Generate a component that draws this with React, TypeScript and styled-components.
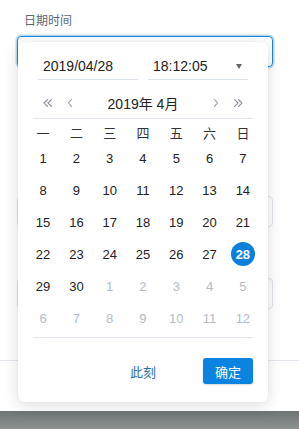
import React from 'react';
import styled, { createGlobalStyle } from 'styled-components';

type Day = { n: number; muted?: boolean; selected?: boolean };

const weekdays = ['一', '二', '三', '四', '五', '六', '日'];

const buildDays = (): Day[] => {
  const days: Day[] = [];
  for (let i = 1; i <= 30; i++) days.push({ n: i, selected: i === 28 });
  for (let i = 1; i <= 12; i++) days.push({ n: i, muted: true });
  return days;
};

const GlobalStyle = createGlobalStyle`
  html, body {
    margin: 0;
    padding: 0;
    background: #fff;
  }
  body {
    font-family: "Liberation Sans", "Noto Sans CJK SC", sans-serif;
    color: #222;
  }
`;

const Chevron = ({ dir, double }: { dir: 'left' | 'right'; double?: boolean }) => {
  const flip = dir === 'right' ? 'scale(-1,1) translate(-14,0)' : undefined;
  return (
    <svg width="14" height="10" viewBox="0 0 14 10">
      <g transform={flip} fill="none" stroke="#8f9aa6" strokeWidth="1.1" strokeLinecap="round" strokeLinejoin="round">
        {double ? (
          <>
            <path d="M6.5 1.5 L3 5 L6.5 8.5" />
            <path d="M10.5 1.5 L7 5 L10.5 8.5" />
          </>
        ) : (
          <path d="M8.5 1.5 L5.5 5 L8.5 8.5" />
        )}
      </g>
    </svg>
  );
};

export default function App() {
  const days = buildDays();

  return (
    <Page>
      <GlobalStyle />
      <Main>
        <Field $after={106}>
          <Label>日期时间</Label>
          <Input $focused />
        </Field>
        {/* fields below sit under the open picker; only their edges show */}
        <Field $after={28}>
          <Label />
          <Input />
        </Field>
        <Field $after={0}>
          <Label />
          <Input />
        </Field>

        <Popup>
          <DateRow>
            <DateInput>2019/04/28</DateInput>
            <DateInput>
              18:12:05
              <Caret />
            </DateInput>
          </DateRow>

          <Nav>
            <NavGroup>
              <NavButton><Chevron dir="left" double /></NavButton>
              <NavButton><Chevron dir="left" /></NavButton>
            </NavGroup>
            <Title>2019年 4月</Title>
            <NavGroup>
              <NavButton><Chevron dir="right" /></NavButton>
              <NavButton><Chevron dir="right" double /></NavButton>
            </NavGroup>
          </Nav>

          <WeekRow>
            {weekdays.map((w) => (
              <WeekCell key={w}>{w}</WeekCell>
            ))}
          </WeekRow>

          <DayGrid>
            {days.map((d, i) => (
              <DayCell key={i} $muted={d.muted}>
                <DayNum $selected={d.selected}>{d.n}</DayNum>
              </DayCell>
            ))}
          </DayGrid>

          <PopupFooter>
            <span />
            <NowLink>此刻</NowLink>
            <OkButton>确定</OkButton>
          </PopupFooter>
        </Popup>
      </Main>
      <Footer />
      <BottomBar />
    </Page>
  );
}

const Page = styled.div`
  display: flex;
  flex-direction: column;
  height: 429px;
  overflow: hidden;
`;

const Main = styled.div`
  position: relative;
  flex: 1;
  padding: 13px 26px 0 17px;
`;

const Field = styled.div<{ $after: number }>`
  display: flex;
  flex-direction: column;
  gap: 7px;
  margin-bottom: ${(p) => p.$after}px;
`;

const Label = styled.div`
  height: 16px;
  font-size: 12px;
  line-height: 16px;
  color: #5b6775;
  padding-left: 7px;
`;

const Input = styled.div<{ $focused?: boolean }>`
  height: 29px;
  border: 1px solid ${(p) => (p.$focused ? '#1a86e0' : '#dfe5ec')};
  border-radius: 4px;
  box-shadow: ${(p) => (p.$focused ? '0 0 0 1.5px rgba(26,134,224,0.3)' : 'none')};
`;

const Popup = styled.div`
  position: absolute;
  top: 42px;
  left: 18px;
  width: 250px;
  height: 360px;
  box-sizing: border-box;
  padding: 10px 15px 0;
  background: #fff;
  border-radius: 6px;
  box-shadow: 0 3px 16px rgba(0, 0, 0, 0.14), 0 0 2px rgba(0, 0, 0, 0.05);
  display: flex;
  flex-direction: column;
`;

const DateRow = styled.div`
  display: flex;
  gap: 10px;
  padding: 0 5px;
`;

const DateInput = styled.div`
  position: relative;
  width: 100px;
  height: 28px;
  box-sizing: border-box;
  border-bottom: 1px solid #dbe3ec;
  padding-left: 5px;
  font-size: 14px;
  line-height: 28px;
  color: #222;
`;

const Caret = styled.span`
  position: absolute;
  right: 6px;
  top: 12px;
  width: 0;
  height: 0;
  border-left: 3.5px solid transparent;
  border-right: 3.5px solid transparent;
  border-top: 5px solid #666;
`;

const Nav = styled.div`
  display: flex;
  align-items: center;
  justify-content: space-between;
  margin-top: 8px;
  height: 30px;
  padding: 0 8px;
  border-bottom: 1px solid #e3e9ef;
`;

const NavGroup = styled.div`
  display: flex;
  gap: 8px;
`;

const NavButton = styled.span`
  display: flex;
  align-items: center;
  justify-content: center;
  width: 14px;
  height: 14px;
`;

const Title = styled.div`
  font-size: 14px;
  color: #222;
`;

const WeekRow = styled.div`
  display: grid;
  grid-template-columns: repeat(7, 33.3px);
  justify-content: center;
  margin: 0 -7px;
  padding-top: 5px;
  height: 18px;
`;

const WeekCell = styled.div`
  text-align: center;
  font-size: 13px;
  line-height: 20px;
  color: #333;
`;

const DayGrid = styled.div`
  display: grid;
  grid-template-columns: repeat(7, 33.3px);
  grid-auto-rows: 32px;
  justify-content: center;
  margin: 0 -7px;
`;

const DayCell = styled.div<{ $muted?: boolean }>`
  display: flex;
  align-items: center;
  justify-content: center;
  font-size: 13px;
  color: ${(p) => (p.$muted ? '#b3bcc6' : '#222')};
`;

const DayNum = styled.span<{ $selected?: boolean }>`
  display: flex;
  align-items: center;
  justify-content: center;
  width: 24px;
  height: 24px;
  border-radius: 50%;
  background: ${(p) => (p.$selected ? '#0a80dc' : 'transparent')};
  color: ${(p) => (p.$selected ? '#fff' : 'inherit')};
  font-weight: ${(p) => (p.$selected ? 700 : 400)};
`;

const PopupFooter = styled.div`
  display: grid;
  grid-template-columns: 1fr auto 1fr;
  align-items: center;
  margin-top: 3px;
  padding-top: 20px;
  border-top: 1px solid #e3e9ef;
`;

const NowLink = styled.span`
  font-size: 13px;
  color: #2d6ea8;
`;

const OkButton = styled.button`
  justify-self: end;
  width: 50px;
  height: 26px;
  border: none;
  border-radius: 3px;
  background: #0a84e0;
  color: #fff;
  font-family: inherit;
  font-size: 13px;
  padding: 0;
  box-shadow: 0 1px 2px rgba(0, 0, 0, 0.15);
`;

const Footer = styled.div`
  height: 50px;
  border-top: 1px solid #e3e8ee;
`;

const BottomBar = styled.div`
  height: 18px;
  background: linear-gradient(#6d7474, #8c9292);
`;
